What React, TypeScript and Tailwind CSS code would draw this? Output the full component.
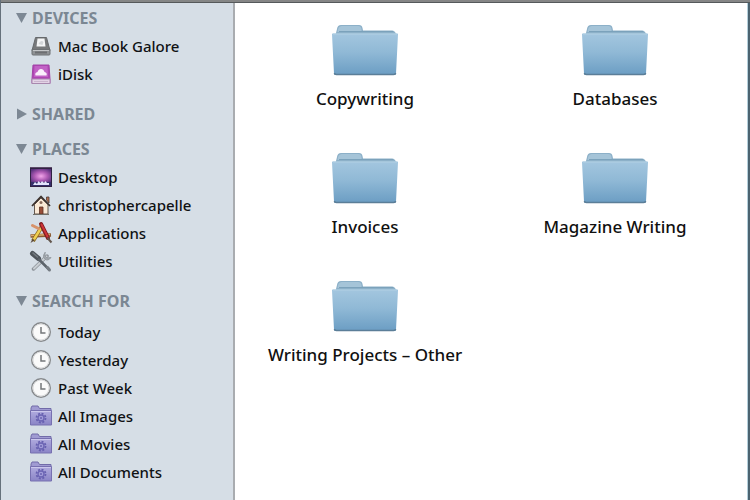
import React from 'react';

type IconComponent = React.FC;

interface SidebarItem {
  label: string;
  icon: IconComponent;
}

interface SidebarSection {
  title: string;
  open: boolean;
  className: string;
  listClassName?: string;
  items: SidebarItem[];
}

const DriveIcon: IconComponent = () => (
  <svg width="24" height="24" viewBox="0 0 24 24" aria-hidden="true">
    <path d="M6.5 3.5h11l3.5 13H3z" fill="#77797b" stroke="#66696c" strokeWidth="1" />
    <path d="M8.5 4.5h7l1 8h-9z" fill="#f4f5f6" />
    <path d="M9.5 10q2.5-5 5-2l-1 3z" fill="#d3d6d9" />
    <path d="M3 15.5h18v4.5q0 1-1 1H4q-1 0-1-1z" fill="#8f9295" stroke="#6d7073" strokeWidth="1" />
    <path d="M4 16.5h16" stroke="#c4c6c8" />
    <path d="M6 18.5h12" stroke="#6c6e71" strokeWidth="2" />
  </svg>
);

const IDiskIcon: IconComponent = () => (
  <svg width="24" height="24" viewBox="0 0 24 24" aria-hidden="true">
    <path d="M4 3h16l1 14v4.5H3V17z" fill="#b045b4" stroke="#a144a6" strokeWidth="1" />
    <path d="M5.5 4h13l.5 11H5z" fill="#c162c5" />
    <path d="M6.5 13.5q-1-3 2-3.500 1-3 3.500-3t3.500 3q3 .5 2 3.500z" fill="#fbeefc" />
    <path d="M3 17h18v4.500H3z" fill="#e3d3e6" stroke="#a889ae" strokeWidth="1" />
    <path d="M5 19.500h14" stroke="#c9b5cd" />
  </svg>
);

const DesktopIcon: IconComponent = () => (
  <svg width="24" height="24" viewBox="0 0 24 24" aria-hidden="true">
    <defs>
      <radialGradient id="aurora" cx="50%" cy="55%" r="65%">
        <stop offset="0" stopColor="#f2a6ea" />
        <stop offset="0.5" stopColor="#ae5bb4" />
        <stop offset="1" stopColor="#55307a" />
      </radialGradient>
    </defs>
    <rect x="1" y="2" width="22" height="20" fill="#2f2143" />
    <rect x="2" y="4" width="20" height="13" fill="url(#aurora)" />
    <path d="M1 2.500h22" stroke="#5c4a68" />
    <path d="M2 17h20v4H2z" fill="#35306a" />
    <path d="M4 20l2-3 2 2 1.500-3 2 2 1.500-2 2 2 1.500-2 1.500 2 2 0v2z" fill="#e4e4fc" />
  </svg>
);

const HomeIcon: IconComponent = () => (
  <svg width="24" height="24" viewBox="0 0 24 24" aria-hidden="true">
    <path d="M17.500 4h2.500v6l-2.500-3z" fill="#b66c4d" stroke="#493b35" strokeWidth="0.800" />
    <path d="M5.500 11.500L12 5l7 6.500v9.500h-13.500z" fill="#fbead7" stroke="#65584e" />
    <path d="M3 13l9-9.500 9 9.500" fill="none" stroke="#3b302c" strokeWidth="1.800" strokeLinejoin="round" />
    <path d="M10.500 14h3.500v7h-3.500z" fill="#994e38" stroke="#5b3327" strokeWidth="0.800" />
    <circle cx="12" cy="9.500" r="1.500" fill="#8a6b5c" />
    <path d="M4 21.500h16" stroke="#71706a" />
  </svg>
);

const ApplicationsIcon: IconComponent = () => (
  <svg width="24" height="24" viewBox="0 0 24 24" aria-hidden="true" fill="none">
    <path d="M1.500 15L22 14" stroke="#8b5a31" strokeWidth="3.500" />
    <path d="M2 14.500l19-1" stroke="#dfae70" strokeWidth="1.500" />
    <path d="M13.500 4.500L4 20" stroke="#84651d" strokeWidth="4" />
    <path d="M13 5.500L4.500 19" stroke="#f0cf50" strokeWidth="2.500" />
    <path d="M3.500 18L1.500 22l4.500-3z" fill="#554437" />
    <path d="M12 3l7 14" stroke="#7f1d20" strokeWidth="4" strokeLinecap="round" />
    <path d="M12.500 3.500l6 12" stroke="#ce3438" strokeWidth="2" strokeLinecap="round" />
    <path d="M18.500 17l4 4.500" stroke="#63564d" strokeWidth="2" />
    <path d="M3.500 4.500l6 3" stroke="#d7926a" strokeWidth="3" strokeLinecap="round" />
  </svg>
);

const UtilitiesIcon: IconComponent = () => (
  <svg width="24" height="24" viewBox="0 0 24 24" aria-hidden="true" fill="none" strokeLinecap="round">
    <path d="M18 7L4.500 20" stroke="#8c9299" strokeWidth="3.500" />
    <path d="M17.500 7.500L5 19.500" stroke="#c9ced3" strokeWidth="2" />
    <path d="M16 3.500q-3 4 0 6.500t6-1.500l-4 .5-2-2z" fill="#a3a9af" stroke="#959ba1" />
    <path d="M3.500 4.500l6 5" stroke="#4d5359" strokeWidth="5" />
    <path d="M4 4l4.500 4" stroke="#737a80" strokeWidth="1.500" />
    <path d="M10 10.500l9.500 9.500" stroke="#5c636a" strokeWidth="2.500" />
    <path d="M18.500 18.500l2 2.500" stroke="#757c83" strokeWidth="3" />
  </svg>
);

const ClockIcon: IconComponent = () => (
  <svg width="24" height="24" viewBox="0 0 24 24" aria-hidden="true">
    <circle cx="12" cy="12" r="9.300" fill="#fafafa" stroke="#85888b" strokeWidth="1.400" />
    <circle cx="12" cy="12" r="8" fill="none" stroke="#d9dadb" />
    <path d="M12 7v6h4.500" fill="none" stroke="#74777a" strokeWidth="1.500" />
  </svg>
);

const SmartFolderIcon: IconComponent = () => (
  <svg width="24" height="24" viewBox="0 0 24 24" aria-hidden="true">
    <defs>
      <linearGradient id="smart" x1="0" y1="0" x2="0" y2="1">
        <stop offset="0" stopColor="#b1acdf" />
        <stop offset="1" stopColor="#8a84c6" />
      </linearGradient>
    </defs>
    <path d="M2 20V4l1-2h6l1.500 2.500H22v16H2z" fill="#a09bd2" stroke="#726ca9" />
    <path d="M1.500 6.500h21v14.500h-21z" fill="url(#smart)" stroke="#7770b0" />
    <path d="M2 7.500h20" stroke="#cbc7ec" />
    <circle cx="12" cy="14" r="4.500" fill="none" stroke="#6760b0" strokeWidth="1.800" strokeDasharray="2 1.530" />
    <circle cx="12" cy="14" r="3" fill="#a19cd8" stroke="#6c65b4" strokeWidth="1.300" />
    <circle cx="12" cy="14" r="1" fill="#6a62b2" />
  </svg>
);

const FolderIcon: IconComponent = () => (
  <svg width="68" height="56" viewBox="0 0 68 56" aria-hidden="true">
    <defs>
      <linearGradient id="folder" x1="0" y1="0" x2="0" y2="1">
        <stop offset="0" stopColor="#a3c6df" />
        <stop offset="0.450" stopColor="#90b9d6" />
        <stop offset="1" stopColor="#6b9dc3" />
      </linearGradient>
    </defs>
    <path d="M4 14l2-8q.5-4 4-4h18q3 0 3.500 3l.5 2.500H61q3 0 4 3.500V14z" fill="#8cb0c8" />
    <path d="M6.500 9q.5-6 4-6h17q2.500 0 3 3v3z" fill="#a5c4d8" />
    <path d="M8 8.500h54" stroke="#7ba2bb" />
    <path d="M1.500 10.500h65q.5 0 .5 1l-2 39q0 1.500-2 1.500H5q-2 0-2-1.500L1 11.500q0-1 .5-1z" fill="url(#folder)" />
    <path d="M2 11h64" stroke="#b2d0e3" />
    <path d="M3.500 50q0 1.500 2 1.500h57q2 0 2-1.500" fill="none" stroke="#5b7e98" strokeWidth="1.500" />
  </svg>
);

const sections: SidebarSection[] = [
  {
    title: 'DEVICES',
    open: true,
    className: 'mt-px',
    items: [
      { label: 'Mac Book Galore', icon: DriveIcon },
      { label: 'iDisk', icon: IDiskIcon },
    ],
  },
  { title: 'SHARED', open: false, className: 'mt-3', items: [] },
  {
    title: 'PLACES',
    open: true,
    className: 'mt-[7px]',
    items: [
      { label: 'Desktop', icon: DesktopIcon },
      { label: 'christophercapelle', icon: HomeIcon },
      { label: 'Applications', icon: ApplicationsIcon },
      { label: 'Utilities', icon: UtilitiesIcon },
    ],
  },
  {
    title: 'SEARCH FOR',
    open: true,
    className: 'mt-3',
    listClassName: 'mt-[3px]',
    items: [
      { label: 'Today', icon: ClockIcon },
      { label: 'Yesterday', icon: ClockIcon },
      { label: 'Past Week', icon: ClockIcon },
      { label: 'All Images', icon: SmartFolderIcon },
      { label: 'All Movies', icon: SmartFolderIcon },
      { label: 'All Documents', icon: SmartFolderIcon },
    ],
  },
];

const folders = ['Copywriting', 'Databases', 'Invoices', 'Magazine Writing', 'Writing Projects – Other'];

const Section: React.FC<{ section: SidebarSection }> = ({ section }) => (
  <section className={section.className}>
    <button
      type="button"
      aria-expanded={section.open}
      className="flex h-7 w-full items-center gap-1 pl-3.5 text-[16px] font-bold text-[#7b8793]"
    >
      <svg width="13" height="12" viewBox="0 0 13 12" aria-hidden="true" fill="#7d8894">
        {section.open ? <path d="M1 1h11L6.500 11z" /> : <path d="M2 0.500v11L12 6z" />}
      </svg>
      {section.title}
    </button>
    {section.items.length > 0 && (
      <ul className={section.listClassName}>
        {section.items.map(({ label, icon: Icon }) => (
          <li key={label}>
            <button type="button" className="flex h-7 w-full items-center gap-[5px] pl-7 text-[15px] font-medium text-[#101214]">
              <Icon />
              {label}
            </button>
          </li>
        ))}
      </ul>
    )}
  </section>
);

export default function App() {
  return (
    <div className="flex min-h-screen flex-col border-l border-[#66717b] bg-white font-['Noto_Sans',sans-serif]">
      <div className="h-[3px] border-b border-[#55595b] bg-[#858686]" />
      <div className="flex grow">
        <aside className="w-[234px] shrink-0 border-r-2 border-[#a9acb0] bg-[#d6dee6]">
          {sections.map((section) => (
            <Section key={section.title} section={section} />
          ))}
        </aside>
        <main className="grid grow grid-cols-2 content-start pt-5 pr-[7px] pl-[5px]">
          {folders.map((name) => (
            <button key={name} type="button" className="flex h-32 flex-col items-center gap-2 text-[17px] leading-6 font-medium text-[#101010]">
              <FolderIcon />
              {name}
            </button>
          ))}
        </main>
        <div className="w-[3px] shrink-0 border-l border-[#b5d0dc] bg-[#4b6370]" />
      </div>
    </div>
  );
}
